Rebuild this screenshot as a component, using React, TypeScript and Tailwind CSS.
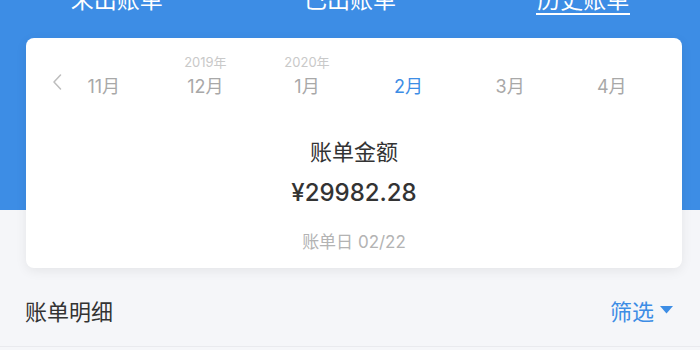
import React from 'react';

const months = [
  { year: '', label: '11月', active: false },
  { year: '2019年', label: '12月', active: false },
  { year: '2020年', label: '1月', active: false },
  { year: '', label: '2月', active: true },
  { year: '', label: '3月', active: false },
  { year: '', label: '4月', active: false },
];

const tabs = ['未出账单', '已出账单', '历史账单'];

export default function App() {
  return (
    <div className="w-[700px] h-[350px] overflow-hidden bg-[linear-gradient(#3d8de5_210px,#f5f6f9_210px)] font-['Inter','Noto_Sans_CJK_SC',sans-serif]">
      {/* Tabs */}
      <div className="h-[38px] flex flex-col">
        <div className="grid grid-cols-3 -mt-[13px]">
          {tabs.map((t, i) => (
            <div key={t} className="flex flex-col items-center">
              <span className="text-[23px] leading-[23px] text-white font-['Noto_Sans_CJK_SC',sans-serif]">{t}</span>
              {i === 2 && <div className="mt-[3px] h-[2px] w-[94px] bg-white" />}
            </div>
          ))}
        </div>
      </div>

      {/* Bill card */}
      <div className="relative ml-[26px] w-[656px] h-[230px] rounded-[8px] bg-white shadow-[0_3px_12px_rgba(0,0,0,0.07)] flex flex-col items-center">
        <svg className="absolute left-[26px] top-[36px]" width="10" height="16" viewBox="0 0 10 16" fill="none">
          <path d="M8.5 1 L2 8 L8.5 15" stroke="#bdbdbd" strokeWidth="1.5" strokeLinecap="round" strokeLinejoin="round" />
        </svg>

        <div className="self-start flex pl-[27px] pt-[16px]">
          {months.map((m) => (
            <div key={m.label} className="w-[101.6px] flex flex-col items-center">
              <span className="h-[16px] text-[13px] leading-[16px] text-[#c9c9c9]">{m.year}</span>
              <span className={`mt-[6px] text-[18px] leading-[22px] ${m.active ? 'text-[#3d8de5]' : 'text-[#a8a8a8]'}`}>{m.label}</span>
            </div>
          ))}
        </div>

        <div className="mt-[37px] text-[22px] leading-[30px] text-[#333] font-['Noto_Sans_CJK_SC',sans-serif]">账单金额</div>
        <div className="mt-[13px] text-[24px] leading-[30px] font-medium text-[#333]">¥29982.28</div>
        <div className="mt-[22px] text-[17px] leading-[24px] text-[#b3b3b3]">账单日 02/22</div>
      </div>

      {/* Detail header */}
      <div className="mt-[27px] ml-[25px] mr-[27px] flex items-center justify-between">
        <span className="text-[22px] leading-[30px] text-[#333] font-['Noto_Sans_CJK_SC',sans-serif]">账单明细</span>
        <span className="flex items-center text-[22px] leading-[30px] text-[#3d8de5] font-['Noto_Sans_CJK_SC',sans-serif]">
          筛选
          <svg className="ml-[6px]" width="13" height="8" viewBox="0 0 13 8">
            <path d="M0 0 H13 L6.5 7.5 Z" fill="#3d8de5" />
          </svg>
        </span>
      </div>
      <div className="mt-[21px] border-t border-[#e9eaee]" />
    </div>
  );
}
